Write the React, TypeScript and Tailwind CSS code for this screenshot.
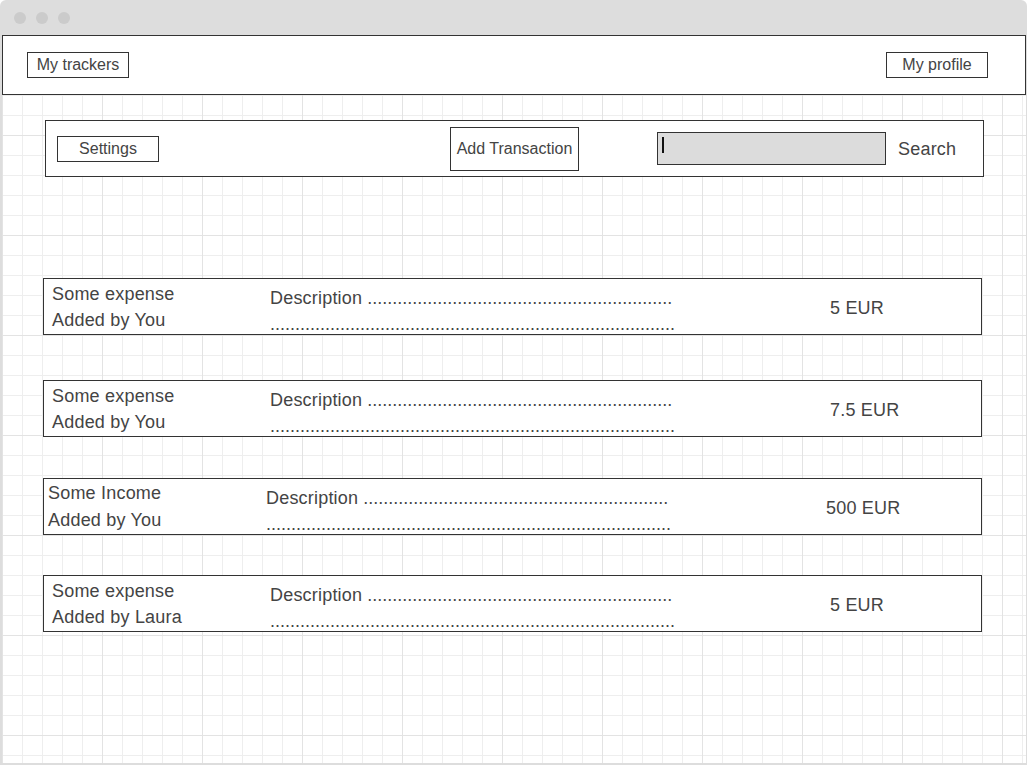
import React from "react";

interface Transaction {
  title: string;
  author: string;
  amount: string;
  shifted?: boolean;
  gap: string;
}

const transactions: Transaction[] = [
  { title: "Some expense", author: "You", amount: "5 EUR", gap: "mt-[101px]" },
  { title: "Some expense", author: "You", amount: "7.5 EUR", gap: "mt-[45px]" },
  { title: "Some Income", author: "You", amount: "500 EUR", shifted: true, gap: "mt-[41px]" },
  { title: "Some expense", author: "Laura", amount: "5 EUR", gap: "mt-[40px]" },
];

const dotsShort = ".".repeat(61);
const dotsLong = ".".repeat(81);

const TransactionRow: React.FC<{ tx: Transaction }> = ({ tx }) => {
  return (
    <div
      className={`${tx.gap} ml-[41px] w-[939px] h-[57px] border border-[#333] bg-white flex text-[18px] text-[#444] whitespace-nowrap tracking-[0.2px] ${
        tx.shifted ? "pl-[4px]" : "pl-[8px]"
      }`}
    >
      <div
        className={`w-[218px] ${
          tx.shifted ? "pt-[1px] leading-[27px]" : "pt-[2px] leading-[26px]"
        }`}
      >
        <div>{tx.title}</div>
        <div>Added by {tx.author}</div>
      </div>
      <div className="w-[560px] pt-[6px] leading-[26px] tracking-normal">
        <div>
          <span className="tracking-[0.2px]">Description</span> {dotsShort}
        </div>
        <div>{dotsLong}</div>
      </div>
      <div className="self-center pt-[3px]">{tx.amount}</div>
    </div>
  );
};

const App: React.FC = () => {
  return (
    <div className="w-[1027px] h-[765px] bg-white font-['Liberation_Sans',Arial,sans-serif]">
      <div className="h-full rounded-t-[6px] bg-[#dddddd] pl-[2px] pr-[1px] pb-[2px] flex flex-col">
        {/* window chrome */}
        <div className="h-[35px] shrink-0 flex items-center gap-[10px] pl-[12px]">
          <span className="w-3 h-3 rounded-full bg-[#cbcbcb]" />
          <span className="w-3 h-3 rounded-full bg-[#cbcbcb]" />
          <span className="w-3 h-3 rounded-full bg-[#cbcbcb]" />
        </div>

        <div className="flex-1 bg-white [background-image:linear-gradient(to_right,#e3e3e3_1px,transparent_1px),linear-gradient(to_bottom,#e3e3e3_1px,transparent_1px),linear-gradient(to_right,#eeeeee_1px,transparent_1px),linear-gradient(to_bottom,#eeeeee_1px,transparent_1px)] [background-size:100px_100px,100px_100px,20px_20px,20px_20px]">
          {/* top nav */}
          <div className="h-[60px] border border-[#333] bg-white flex items-center justify-between pl-[24px] pr-[37px] text-[16px] text-[#444]">
            <button className="w-[102px] h-[26px] border border-[#333] bg-white leading-none">
              My trackers
            </button>
            <button className="w-[102px] h-[26px] border border-[#333] bg-white leading-none">
              My profile
            </button>
          </div>

          {/* toolbar */}
          <div className="mt-[25px] ml-[43px] w-[939px] h-[57px] border border-[#333] bg-white flex items-center pl-[11px] text-[#444]">
            <button className="w-[102px] h-[26px] border border-[#333] text-[16px] leading-none">
              Settings
            </button>
            <button className="ml-[291px] w-[129px] h-[44px] border border-[#333] text-[16px] leading-none whitespace-nowrap">
              Add Transaction
            </button>
            <div className="ml-[78px] w-[229px] h-[33px] border border-[#333] bg-[#dcdcdc] flex items-start pl-[4px] pt-[4px]">
              <span className="w-[1.5px] h-[16px] bg-[#111]" />
            </div>
            <span className="ml-[12px] text-[18px] pt-[2px] tracking-[0.2px]">Search</span>
          </div>

          {transactions.map((tx, i) => (
            <TransactionRow key={i} tx={tx} />
          ))}
        </div>
      </div>
    </div>
  );
};

export default App;
